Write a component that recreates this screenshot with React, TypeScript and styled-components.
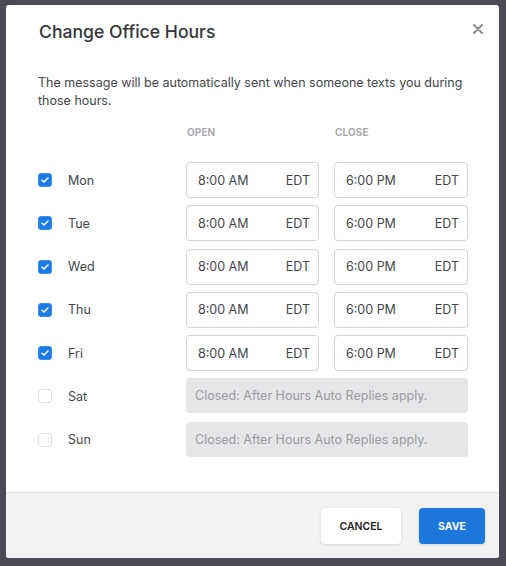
import styled, { createGlobalStyle } from "styled-components";

const GlobalStyle = createGlobalStyle`
  html, body {
    margin: 0;
    padding: 0;
    background: #4b4a56;
  }
  body {
    font-family: Inter, "Noto Sans", sans-serif;
  }
`;

const Backdrop = styled.div`
  width: 506px;
  height: 566px;
  padding: 5px 7px 8px 6px;
  box-sizing: border-box;
  background: #4b4a56;
`;

const Modal = styled.div`
  width: 493px;
  height: 553px;
  background: #fff;
  border-radius: 3px;
  display: flex;
  flex-direction: column;
  overflow: hidden;
`;

const Header = styled.div`
  display: flex;
  justify-content: space-between;
  align-items: flex-start;
  padding: 15px 14px 0 33px;
  height: 38px;
`;

const Title = styled.h2`
  margin: 0;
  font-size: 17.6px;
  font-weight: 500;
  color: #35363b;
  line-height: 24px;
`;

const CloseButton = styled.button`
  border: none;
  background: none;
  padding: 0;
  width: 14px;
  height: 14px;
  margin-top: 2px;
  cursor: pointer;
  display: flex;
  align-items: center;
  justify-content: center;
`;

const Body = styled.div`
  flex: 1;
  padding: 16px 32px 0 32px;
`;

const Description = styled.p`
  margin: 0 -8px 0 0;
  font-size: 12.5px;
  line-height: 18px;
  color: #45464c;
`;

const Grid = styled.div`
  display: grid;
  grid-template-columns: 30px 118px 148px 134px;
  margin-top: 11px;
`;

const ColHead = styled.div<{ $col: number }>`
  grid-column: ${({ $col }) => $col};
  font-size: 10px;
  font-weight: 700;
  color: #a9aab0;
  letter-spacing: 0.1px;
  padding-left: 1px;
  height: 22px;
  line-height: 22px;
  margin-bottom: 19px;
`;

const Row = styled.div`
  display: contents;
`;

const Cell = styled.div`
  height: 36px;
  margin-bottom: 7.3px;
  display: flex;
  align-items: center;
`;

const Check = styled.span<{ $on: boolean }>`
  width: 14px;
  height: 14px;
  box-sizing: border-box;
  border-radius: 3px;
  display: flex;
  align-items: center;
  justify-content: center;
  background: ${({ $on }) => ($on ? "#1a7be6" : "#fff")};
  border: 1px solid ${({ $on }) => ($on ? "#3b8cec" : "#dfe1e6")};
`;

const DayLabel = styled.span`
  font-size: 12.5px;
  color: #45464c;
`;

const TimeBox = styled.div<{ $wide?: boolean }>`
  width: ${({ $wide }) => ($wide ? "134px" : "133px")};
  height: 36px;
  box-sizing: border-box;
  border: 1px solid #d3d4d8;
  border-radius: 4px;
  display: flex;
  align-items: center;
  justify-content: space-between;
  padding: 0 8px 0 11px;
  font-size: 12.5px;
  color: #45464c;
`;

const ClosedBox = styled.div`
  grid-column: 3 / span 2;
  height: 35px;
  box-sizing: border-box;
  background: #e6e6e8;
  border-radius: 4px;
  display: flex;
  align-items: center;
  padding-left: 9px;
  font-size: 12.5px;
  color: #9a9ba1;
  margin-bottom: 8.3px;
`;

const Footer = styled.div`
  height: 66px;
  border-top: 1px solid #dfe1e6;
  background: #f2f2f3;
  display: flex;
  justify-content: flex-end;
  align-items: flex-start;
  gap: 18px;
  padding: 15px 14px 0 0;
  box-sizing: border-box;
`;

const Button = styled.button<{ $primary?: boolean }>`
  height: 36px;
  width: ${({ $primary }) => ($primary ? "66px" : "80px")};
  padding: 0;
  border: none;
  border-radius: 4px;
  font-family: Inter, sans-serif;
  font-size: 10.5px;
  font-weight: ${({ $primary }) => ($primary ? 700 : 600)};
  cursor: pointer;
  background: ${({ $primary }) => ($primary ? "#1b77dc" : "#fff")};
  color: ${({ $primary }) => ($primary ? "#fff" : "#1f2026")};
  box-shadow: 0 1px 3px rgba(0, 0, 0, 0.12);
`;

const days = [
  { name: "Mon", open: true },
  { name: "Tue", open: true },
  { name: "Wed", open: true },
  { name: "Thu", open: true },
  { name: "Fri", open: true },
  { name: "Sat", open: false },
  { name: "Sun", open: false },
];

function CheckIcon() {
  return (
    <svg width="8" height="6" viewBox="0 0 8 6">
      <path
        d="M1 3.2 L3 5 L7 1"
        fill="none"
        stroke="#fff"
        strokeWidth="1.5"
        strokeLinecap="round"
        strokeLinejoin="round"
      />
    </svg>
  );
}

export default function App() {
  return (
    <Backdrop>
      <GlobalStyle />
      <Modal>
        <Header>
          <Title>Change Office Hours</Title>
          <CloseButton aria-label="Close">
            <svg width="10" height="10" viewBox="0 0 10 10">
              <path
                d="M1 1 L9 9 M9 1 L1 9"
                stroke="#8a8b90"
                strokeWidth="2"
                strokeLinecap="round"
              />
            </svg>
          </CloseButton>
        </Header>
        <Body>
          <Description>
            The message will be automatically sent when someone texts you during
            those hours.
          </Description>
          <Grid>
            <ColHead $col={3}>OPEN</ColHead>
            <ColHead $col={4}>CLOSE</ColHead>
            {days.map((d) => (
              <Row key={d.name}>
                <Cell>
                  <Check $on={d.open}>{d.open ? <CheckIcon /> : null}</Check>
                </Cell>
                <Cell>
                  <DayLabel>{d.name}</DayLabel>
                </Cell>
                {d.open ? (
                  <>
                    <Cell>
                      <TimeBox>
                        <span>8:00 AM</span>
                        <span>EDT</span>
                      </TimeBox>
                    </Cell>
                    <Cell>
                      <TimeBox $wide>
                        <span>6:00 PM</span>
                        <span>EDT</span>
                      </TimeBox>
                    </Cell>
                  </>
                ) : (
                  <ClosedBox>Closed: After Hours Auto Replies apply.</ClosedBox>
                )}
              </Row>
            ))}
          </Grid>
        </Body>
        <Footer>
          <Button>CANCEL</Button>
          <Button $primary>SAVE</Button>
        </Footer>
      </Modal>
    </Backdrop>
  );
}
